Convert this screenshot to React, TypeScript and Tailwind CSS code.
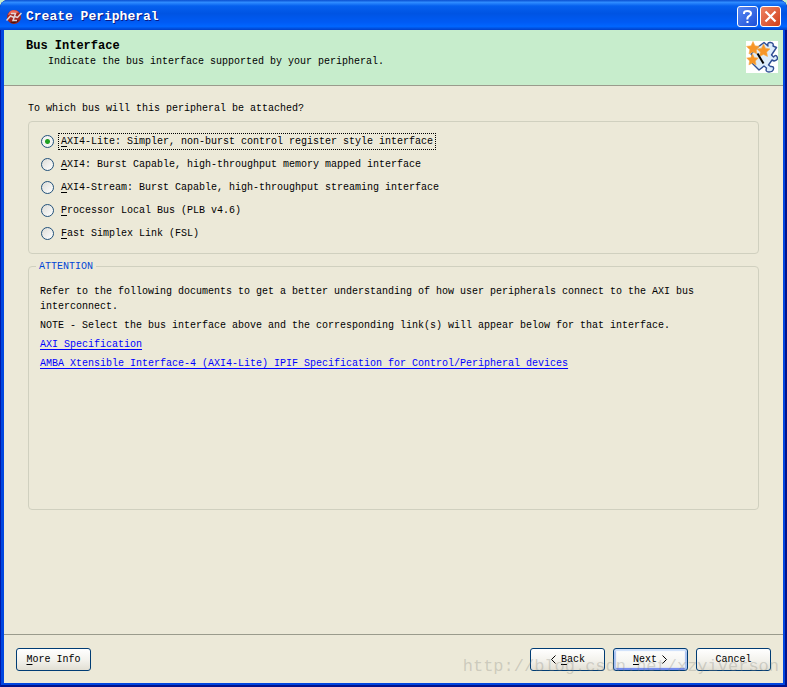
import { useState, type ReactNode } from "react";

const BUSES = [
  { id: "axi4-lite", label: "AXI4-Lite: Simpler, non-burst control register style interface" },
  { id: "axi4", label: "AXI4: Burst Capable, high-throughput memory mapped interface" },
  { id: "axi4-stream", label: "AXI4-Stream: Burst Capable, high-throughput streaming interface" },
  { id: "plb", label: "Processor Local Bus (PLB v4.6)" },
  { id: "fsl", label: "Fast Simplex Link (FSL)" },
];

export default function App() {
  const [bus, setBus] = useState("axi4-lite");

  return (
    <div className="flex min-h-screen flex-col bg-[#c7edcc] font-['Liberation_Mono','Noto_Sans_CJK_SC',monospace] text-[10px] leading-[15px] text-black">
      <div className="flex flex-1 flex-col overflow-hidden rounded-t-lg bg-[#0046e0] shadow-[inset_1px_0_0_#0018a8,inset_-2px_0_0_#00138c,inset_0_-2px_0_#00138c]">
        <TitleBar />
        <div className="mx-1 mb-1 flex flex-1 flex-col bg-[#ece9d8]">
          <header className="flex h-14 items-start justify-between border-b border-[#9a9b8c] bg-[#c7edcc] pl-[22px] pr-[5px] pt-[9px]">
            <div>
              <h1 className="text-[12px] font-bold leading-[15px]">Bus Interface</h1>
              <p className="pl-[22px]">Indicate the bus interface supported by your peripheral.</p>
            </div>
            <WizardIcon />
          </header>

          <main className="flex-1 px-6 pt-[15px]">
            <p id="bus-question">To which bus will this peripheral be attached?</p>
            <div
              role="radiogroup"
              aria-labelledby="bus-question"
              className="mt-[5px] flex flex-col gap-1 rounded-[4px] border border-[#d0d0bf] px-3 py-[10px]"
            >
              {BUSES.map((b) => (
                <label key={b.id} className="flex h-[19px] items-center gap-1">
                  <input
                    type="radio"
                    name="bus"
                    value={b.id}
                    checked={bus === b.id}
                    onChange={() => setBus(b.id)}
                    className="peer size-[13px] shrink-0 appearance-none rounded-full border border-[#21517a] bg-linear-to-br from-[#dcdcd7] to-white checked:bg-[radial-gradient(circle,#21a121_0,#21a121_2px,#f4f4f2_3px)]"
                  />
                  <span className="border border-dotted border-transparent px-[2px] peer-checked:border-black">
                    <Mnemonic text={b.label} />
                  </span>
                </label>
              ))}
            </div>

            <fieldset className="mt-[5px] min-h-[251px] rounded-[4px] border border-[#d0d0bf] px-[11px] pb-3 pt-[10px]">
              <legend className="-ml-1 px-[3px] text-[#0046d5]">ATTENTION</legend>
              <p>
                Refer to the following documents to get a better understanding of how user peripherals connect to the AXI bus
                interconnect.
              </p>
              <p className="mt-1">
                NOTE - Select the bus interface above and the corresponding link(s) will appear below for that interface.
              </p>
              <p className="mt-1">
                <a href="#axi" className="text-[#0000ff] underline underline-offset-2">
                  AXI Specification
                </a>
              </p>
              <p className="mt-1">
                <a href="#ipif" className="text-[#0000ff] underline underline-offset-2">
                  AMBA Xtensible Interface-4 (AXI4-Lite) IPIF Specification for Control/Peripheral devices
                </a>
              </p>
            </fieldset>
          </main>

          <footer className="relative flex items-center gap-2 border-t border-[#9a9b8c] px-3 pb-3 pt-[13px]">
            <WizardButton>
              <Mnemonic text="More Info" />
            </WizardButton>
            <div className="flex-1" />
            <WizardButton>
              <Chevron d="M5.5 .5l-4 4 4 4" />
              <Mnemonic text="Back" />
            </WizardButton>
            <WizardButton primary>
              <Mnemonic text="Next" />
              <Chevron d="M1.5 .5l4 4-4 4" />
            </WizardButton>
            <WizardButton>Cancel</WizardButton>
            <span className="pointer-events-none absolute bottom-1 right-1 text-[17px] leading-6 text-[#808078]/30">
              http://blog.csdn.net/xzyiverson
            </span>
          </footer>
        </div>
      </div>
    </div>
  );
}

function TitleBar() {
  return (
    <div className="flex h-[30px] shrink-0 items-center gap-1 bg-[linear-gradient(180deg,#0a4fd0_0%,#2f8cff_8%,#0560ee_20%,#0054e3_45%,#005bf5_75%,#0066ff_88%,#0040c8_100%)] px-[6px] pt-[3px]">
      <svg viewBox="0 0 16 16" className="size-4" aria-hidden="true">
        <circle cx="8" cy="8" r="7" fill="#a3261f" />
        <path d="M2 6a6.300 6.300 0 0 1 11-2.500L8 4z" fill="#ee6a58" />
        <path d="M4 13a6 6 0 0 0 9-2l-4 1z" fill="#4b1410" />
        <path
          d="M.5 11.500L4.500 7l3 1.200M5 4.500h4.500L7 11.500h4M8.500 7.500l3 1L15.500 4"
          fill="none"
          stroke="#e3d6d8"
          strokeWidth="1.500"
        />
      </svg>
      <span className="flex-1 text-[13px] font-bold leading-4 text-white [text-shadow:1px_1px_0_#0a1883]">
        Create Peripheral
      </span>
      <div className="flex gap-[2px]">
        <button
          type="button"
          aria-label="Help"
          className="flex size-[21px] items-center justify-center rounded-[3px] border border-white bg-linear-to-br from-[#5a88f2] to-[#1c4ed8]"
        >
          <svg viewBox="0 0 13 15" className="h-[15px] w-[13px]" fill="none" stroke="#fff" strokeWidth="2" aria-hidden="true">
            <path d="M3 5V4Q3 2 6.500 2T10 4.500Q10 6 8 7.200T6.500 10.500M6.500 12v2" />
          </svg>
        </button>
        <button
          type="button"
          aria-label="Close"
          className="flex size-[21px] items-center justify-center rounded-[3px] border border-white bg-linear-to-br from-[#ee8362] to-[#d03c14]"
        >
          <svg viewBox="0 0 13 13" className="size-[13px]" stroke="#fff" strokeWidth="2.200" aria-hidden="true">
            <path d="M1.500 1.500l10 10M11.500 1.500l-10 10" />
          </svg>
        </button>
      </div>
    </div>
  );
}

function Mnemonic({ text }: { text: string }) {
  return (
    <span>
      <u className="underline-offset-2">{text[0]}</u>
      {text.slice(1)}
    </span>
  );
}

function WizardButton({ primary, children }: { primary?: boolean; children: ReactNode }) {
  return (
    <button
      type="button"
      className={
        primary
          ? "flex h-[23px] w-[75px] items-center justify-center gap-1 rounded-[3px] border border-[#003c74] bg-linear-to-b from-white to-[#eeeee8] shadow-[inset_0_2px_1px_#cee0fb,inset_2px_0_1px_#a8c0f0,inset_-2px_0_1px_#a8c0f0,inset_0_-2px_1px_#6982ee]"
          : "flex h-[23px] w-[75px] items-center justify-center gap-1 rounded-[3px] border border-[#003c74] bg-linear-to-b from-white via-[#f4f3ee] to-[#e2dfd4]"
      }
    >
      {children}
    </button>
  );
}

function Chevron({ d }: { d: string }) {
  return (
    <svg viewBox="0 0 7 9" className="h-[9px] w-[7px]" fill="none" stroke="#000" aria-hidden="true">
      <path d={d} />
    </svg>
  );
}

/** Puzzle piece with a wand and three stars */
function WizardIcon() {
  const star = "M0-6.500L2-2.200 6.500-1.600 3.200 1.600 4 6 0 3.900-4 6-3.200 1.600-6.500-1.600-2-2.200z";
  return (
    <svg viewBox="0 0 32 32" className="mt-[2px] size-8" aria-hidden="true">
      <path d="M0 0h32v32H0z" fill="#fff" />
      <path
        d="M12 6L18 1.500l4 3.500Q21 1 24.500 1.500T27 5l3.500 1.500-5 7.500 2 2Q30 13 31.200 16T28 20l-2-1-3.500 5 2 1.500Q28 25 27.500 28T23 31t-2.500-4L18 25l-5 4-8-8 3-3-3-5z"
        fill="#dcecfb"
        stroke="#2f4f94"
        strokeWidth="1.400"
        strokeLinejoin="round"
      />
      <g fill="#f79628" stroke="#f7b04e" strokeWidth=".6" strokeLinejoin="round">
        <path d={star} transform="translate(7 7)" />
        <path d={star} transform="translate(17.500 9.500)" />
        <path d={star} transform="translate(6.500 18.500) scale(.9)" />
      </g>
      <path d="M11.500 12.500l6 10" stroke="#000" strokeWidth="2" />
    </svg>
  );
}
